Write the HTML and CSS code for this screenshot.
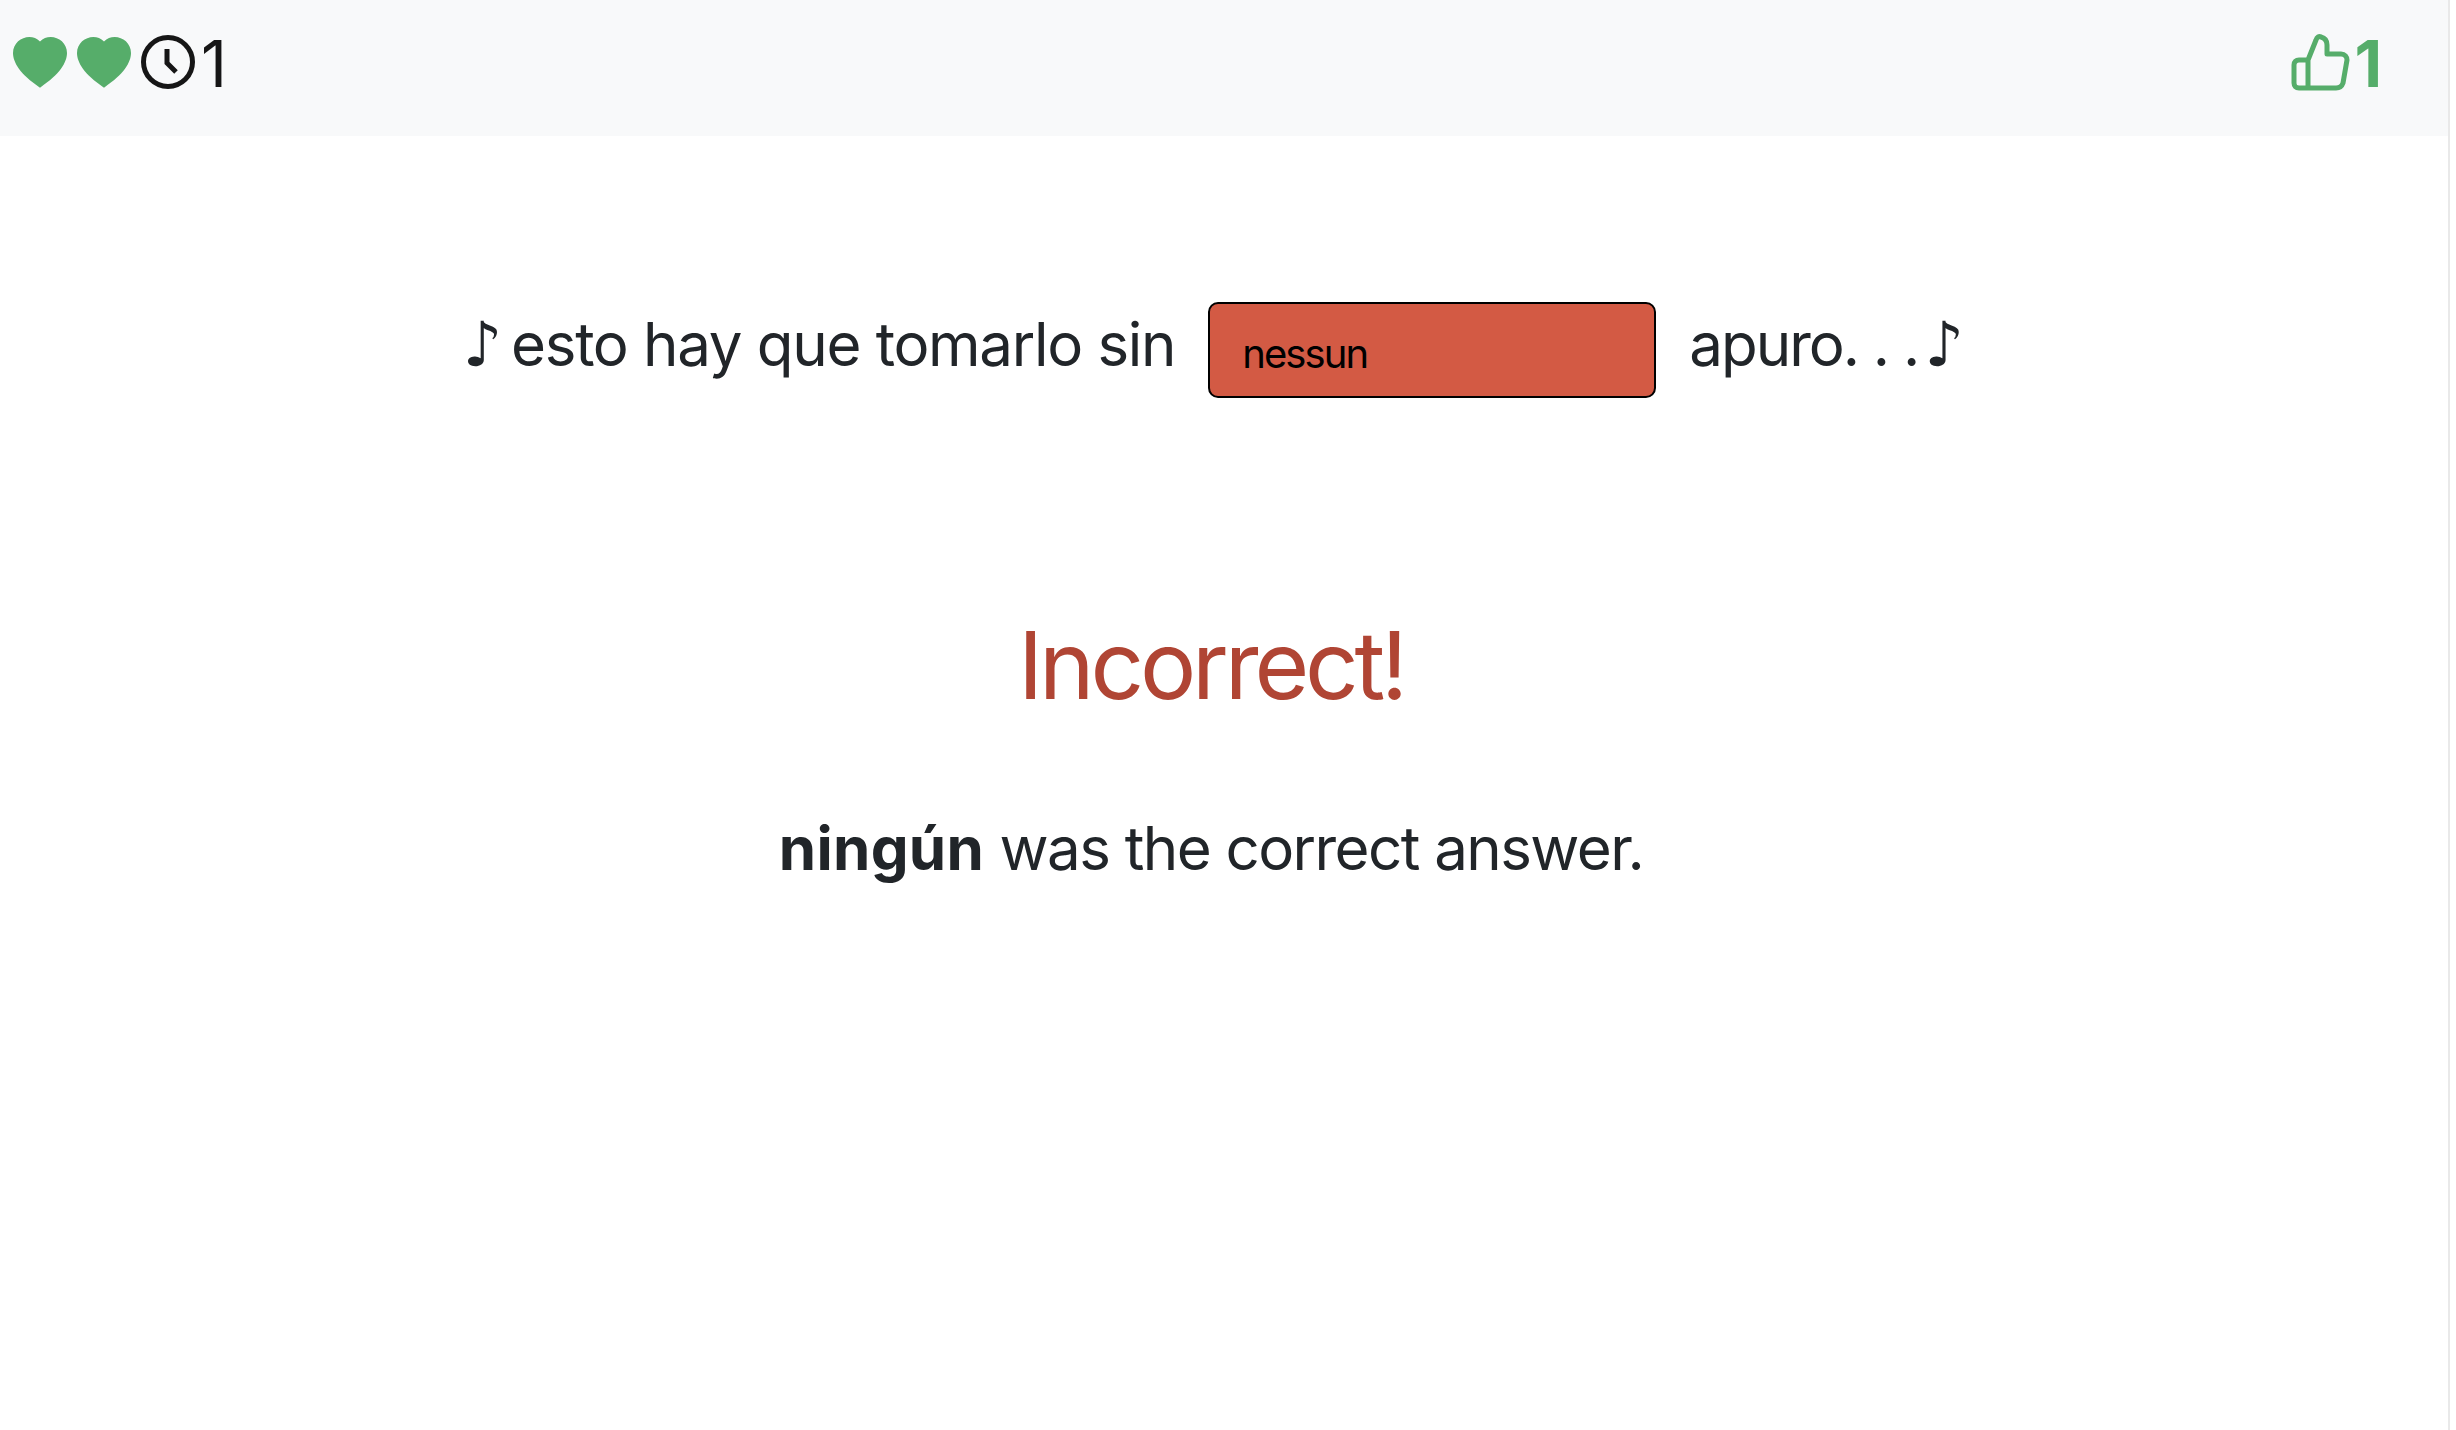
FILE: index.html
```html
<!DOCTYPE html>
<html>
<head>
    <title>Lyrics Quiz</title>
    <link rel="stylesheet" href="styles.css">
</head>
<body>
<div class="page">
    <nav class="topbar">
        <div class="stats">
            <svg class="heart" viewBox="0 0 16 16"><path fill-rule="evenodd" d="M8 1.314C12.438-3.248 23.534 4.735 8 15-7.534 4.736 3.562-3.248 8 1.314z"/></svg>
            <svg class="heart" viewBox="0 0 16 16"><path fill-rule="evenodd" d="M8 1.314C12.438-3.248 23.534 4.735 8 15-7.534 4.736 3.562-3.248 8 1.314z"/></svg>
            <svg class="clock" viewBox="0 0 54 54"><circle cx="27" cy="27" r="24.5"/><path d="M26 14v14l9 9"/></svg>
            <span class="count">1</span>
        </div>
        <div class="score">
            <svg class="thumb" viewBox="0 0 60 60"><path d="M17 26 25 6c1-3 3-4 5-3 4 1 6 4 6 8v9h14c4 0 6 3 6 6l-4 23c-1 3-3 5-7 5H8c-3 0-5-2-5-5V31c0-3 2-5 5-5h9v29"/></svg>
            <span class="count">1</span>
        </div>
    </nav>
    <main class="quiz">
        <div class="lyric">
            <span><span class="note note-start">♪ </span>esto hay que tomarlo sin</span>
            <input class="answer" type="text" value="nessun">
            <span class="lyric-end">apuro. . .<span class="note note-end"> ♪</span></span>
        </div>
        <h1 class="result">Incorrect!</h1>
        <p class="correction"><strong>ningún</strong> was the correct answer.</p>
    </main>
</div>
</body>
</html>
```

FILE: styles.css
```css
html, body {
    height: 100%;
}
body {
    margin: 0;
    background-color: #fff;
    color: #212529;
    font-family: 'Inter', sans-serif;
    overflow: hidden;
}
.page {
    height: 100%;
    margin-right: 6px;
    border-right: 2px solid #e9e9e9;
}
.topbar {
    display: flex;
    justify-content: space-between;
    align-items: center;
    height: 136px;
    padding: 0 66px 8px 13px;
    background-color: #f8f9fa;
    box-sizing: border-box;
}
.stats, .score {
    display: flex;
    align-items: center;
}
.heart {
    width: 54px;
    height: 54px;
    margin-right: 10px;
    fill: #56ad6a;
}
.clock {
    width: 54px;
    height: 54px;
    margin: 0 6px 4px 0;
    fill: none;
    stroke: #161616;
    stroke-width: 5;
}
.count {
    font-size: 64px;
    line-height: 1;
    color: #161616;
}
.thumb {
    width: 60px;
    height: 60px;
    margin-right: 3px;
    fill: none;
    stroke: #56ad6a;
    stroke-width: 5;
    stroke-linejoin: round;
}
.score .count {
    color: #56ad6a;
    font-weight: 700;
}
.quiz {
    display: flex;
    flex-direction: column;
    align-items: center;
    padding: 166px 26px 0 0;
}
.lyric {
    display: flex;
    align-items: center;
    gap: 33px;
    padding-left: 3px;
    font-size: 60px;
    font-weight: 400;
    letter-spacing: -1.3px;
}
.lyric > span {
    padding-bottom: 12px;
}
.lyric-end {
    letter-spacing: -2px;
}
.note {
    font-family: 'DejaVu Sans', sans-serif;
    font-size: 62px;
    line-height: 1;
}
.note-start {
    word-spacing: -8.4px;
}
.note-end {
    word-spacing: -11.4px;
}
.answer {
    width: 448px;
    height: 96px;
    padding: 6px 32px 0;
    box-sizing: border-box;
    background-color: #d35a44;
    border: 2px solid #000;
    border-radius: 10px;
    font-family: 'Inter', sans-serif;
    font-size: 40px;
    letter-spacing: -1.9px;
    color: #000;
}
.result {
    margin: 0;
    padding-top: 210px;
    font-size: 94px;
    font-weight: 370;
    letter-spacing: -4.2px;
    color: #b04534;
}
.correction {
    margin: 0;
    padding-top: 90px;
    font-size: 60px;
    font-weight: 400;
    letter-spacing: -1.55px;
}
.correction strong {
    font-weight: 700;
    letter-spacing: 0.3px;
}
```
